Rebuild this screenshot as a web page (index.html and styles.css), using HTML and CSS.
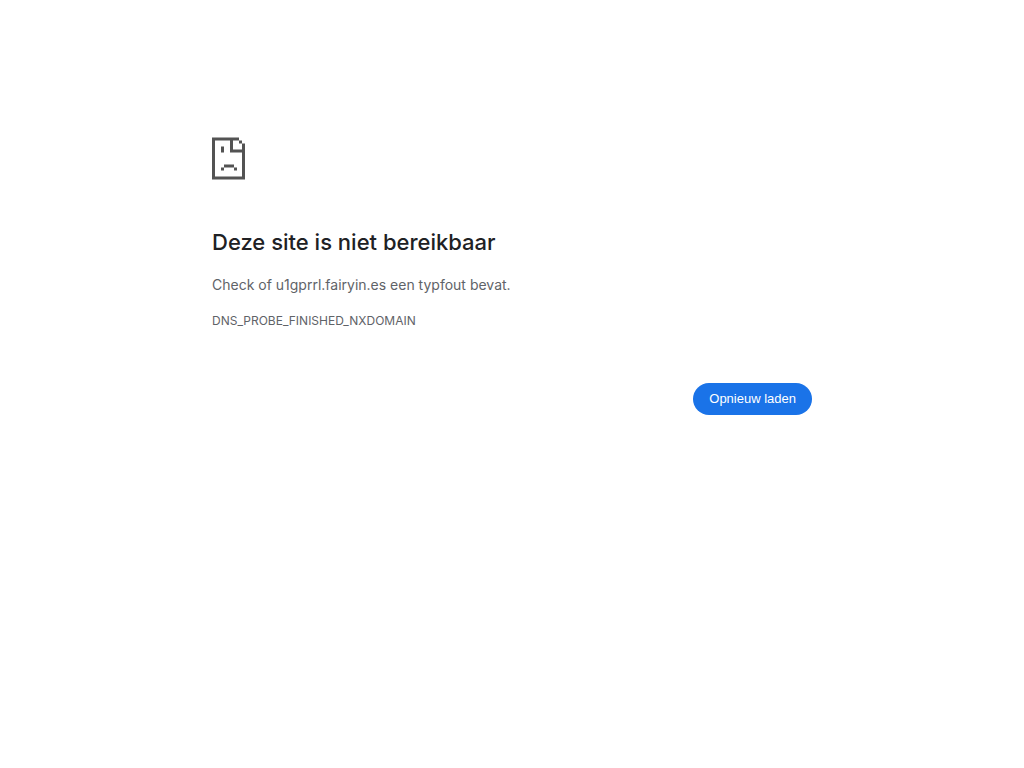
FILE: index.html
```html
<!DOCTYPE html>
<html lang="nl">
<head>
<meta charset="utf-8">
<meta name="viewport" content="width=device-width, initial-scale=1">
<title>Deze site is niet bereikbaar</title>
<link rel="stylesheet" href="styles.css">
</head>
<body>
<main class="error-page">
  <svg class="error-icon" viewBox="0 0 33 43" aria-hidden="true">
    <path fill="#535353" fill-rule="evenodd" d="M0 .5H27V3.5H30V6.5H33V42.5H0ZM3 3.5V39.5H30V15.5H18V3.5ZM21 3.5V12.5H30V6.5H27V3.5Z"/>
    <path fill="#535353" d="M9 9.500h3v6H9zM12 27.500h10v3H12zM9 30.500h3v3H9zM22 30.500h3v3h-3z"/>
  </svg>
  <h1 class="error-title">Deze site is niet bereikbaar</h1>
  <p class="error-summary">Check of u1gprrl.fairyin.es een typfout bevat.</p>
  <p class="error-code">DNS_PROBE_FINISHED_NXDOMAIN</p>
  <div class="actions">
    <button class="reload-button" type="button">Opnieuw laden</button>
  </div>
</main>
</body>
</html>
```

FILE: styles.css
```css
body {
  margin: 0;
  background: #fff;
  color: #5f6368;
  font-family: Inter, "Liberation Sans", sans-serif;
}

.error-page {
  box-sizing: border-box;
  max-width: 600px;
  margin: 0 auto;
  padding-top: 137px;
}

.error-icon {
  display: block;
  width: 33px;
  height: 43px;
}

.error-title {
  margin: 46px 0 15px;
  color: #202124;
  font-size: 22px;
  font-weight: 500;
  line-height: 32px;
}

.error-summary {
  margin: 0 0 12px;
  font-size: 14px;
  line-height: 24px;
}

.error-code {
  margin: 0;
  font-size: 12px;
  line-height: 24px;
}

.actions {
  display: flex;
  justify-content: flex-end;
  margin-top: 50px;
}

.reload-button {
  padding: 8px 16px;
  border: 0;
  border-radius: 20px;
  background: #1a73e8;
  color: #fff;
  font-family: "Liberation Sans", sans-serif;
  font-size: 13px;
  font-weight: 500;
  line-height: 16px;
  cursor: pointer;
}
```
